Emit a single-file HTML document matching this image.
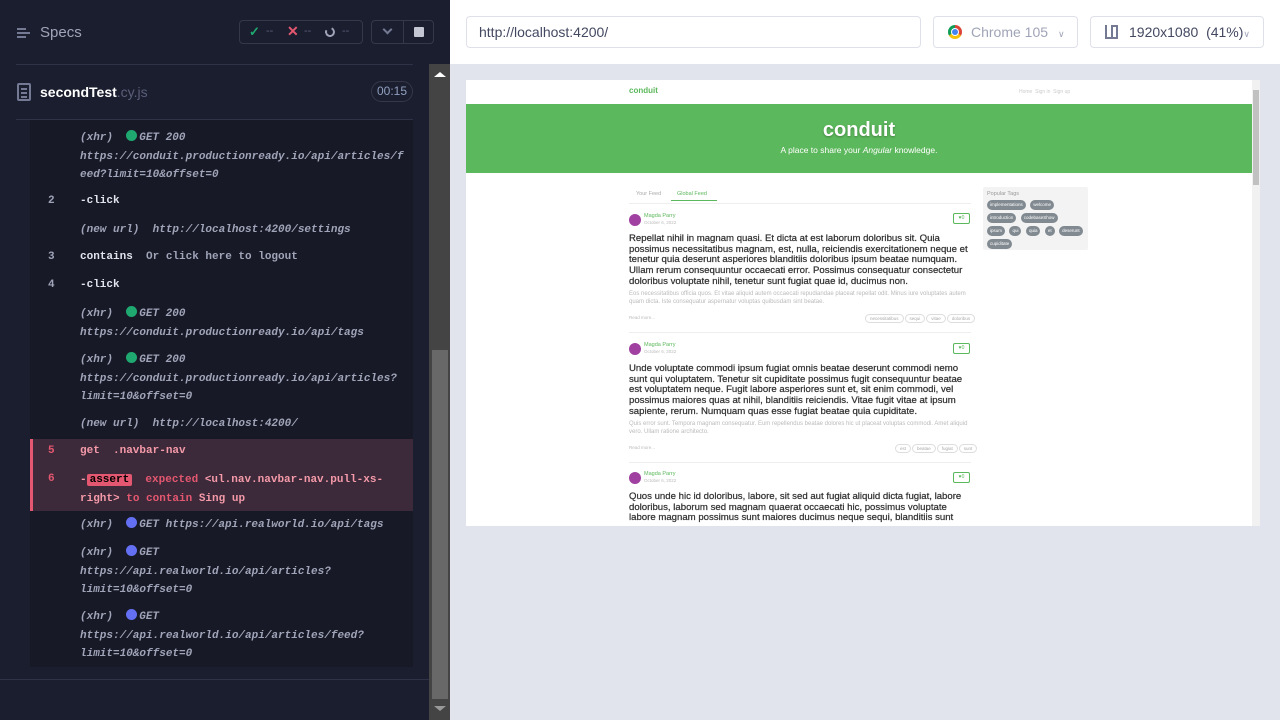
<!DOCTYPE html>
<html><head><meta charset="utf-8"><style>
*{margin:0;padding:0;box-sizing:border-box}
body{width:1280px;height:720px;overflow:hidden;background:#e1e3ed;font-family:"Liberation Sans",sans-serif;position:relative}
#left{position:absolute;left:0;top:0;width:450px;height:720px;background:#1b1e2e}
.abs{position:absolute}
.mono{font-family:"Liberation Mono",monospace;font-size:11px;white-space:nowrap}
.r{position:absolute;left:80px;color:#e1e3ed;font-weight:bold}
.x{color:#a0a4b8;font-style:italic;font-weight:bold;line-height:18.5px}
.n{position:absolute;left:48px;color:#a0a4b8;font-weight:bold}
.dotg{display:inline-block;width:11px;height:11px;border-radius:50%;background:#1fa971;vertical-align:-1px;margin-right:2px}
.dotb{display:inline-block;width:11px;height:11px;border-radius:50%;background:#6470f3;vertical-align:-1px;margin-right:2px}
.prev{font-family:"Liberation Sans",sans-serif}
.title{font-size:9.6px;line-height:10.7px;color:#333;-webkit-text-stroke:.25px #333}
.desc{font-size:6px;line-height:8.5px;color:#bbb;margin-top:2px}
.tags{position:absolute;white-space:nowrap;font-size:0;line-height:0}
.tag{display:inline-block;border:1px solid #ddd;border-radius:6px;font-size:4.5px;line-height:5px;color:#aaa;padding:1px 4px;margin-left:1px}
.ptag{display:inline-block;background:#818a91;color:#fff;border-radius:6px;font-size:4.5px;padding:1px 3px;margin:1px 0}
.av{position:absolute;width:12px;height:12px;border-radius:50%;background:#a040a0}
.heart{position:absolute;width:17px;height:11px;border:1px solid #5cb85c;border-radius:2px;font-size:5px;color:#5cb85c;text-align:center;line-height:9px}
.auth{position:absolute;font-size:5.5px;color:#5cb85c}
.date{position:absolute;font-size:4.5px;color:#bbb}
</style></head><body>
<div id="left">
 <div class="abs" style="left:17px;top:27px;width:15px;height:12px">
  <div class="abs" style="left:0;top:1px;width:9px;height:2px;background:#747994"></div>
  <div class="abs" style="left:0;top:5px;width:13px;height:2px;background:#747994"></div>
  <div class="abs" style="left:0;top:9px;width:9px;height:2px;background:#747994"></div>
 </div>
 <div class="abs" style="left:40px;top:24px;font-size:15px;color:#a0a4b8">Specs</div>
 <div class="abs" style="left:239px;top:20px;width:124px;height:24px;border:1px solid #343849;border-radius:4px;font-size:11px;color:#5a5f7a">
  <span class="abs" style="left:9px;top:3px;color:#1fa971;font-weight:bold;font-size:13px">✓</span><span class="abs" style="left:26px;top:4px">--</span>
  <span class="abs" style="left:47px;top:2px;color:#e45770;font-weight:bold;font-size:14px">✕</span><span class="abs" style="left:64px;top:4px">--</span>
  <span class="abs" style="left:85px;top:6px;width:10px;height:10px;border:2px solid #a0a4b8;border-top-color:transparent;border-radius:50%;transform:rotate(-20deg)"></span><span class="abs" style="left:102px;top:4px">--</span>
 </div>
 <div class="abs" style="left:371px;top:20px;width:63px;height:24px;border:1px solid #343849;border-radius:4px">
  <div class="abs" style="left:31px;top:0;width:1px;height:22px;background:#343849"></div>
  <div class="abs" style="left:12px;top:5px;width:7px;height:7px;border-right:2px solid #747994;border-bottom:2px solid #747994;transform:rotate(45deg)"></div>
  <div class="abs" style="left:42px;top:6px;width:10px;height:10px;background:#c4c6d3;border-radius:1px"></div>
 </div>
 <div class="abs" style="left:16px;top:64px;width:397px;height:1px;background:#2e3247"></div>
 <div class="abs" style="left:17px;top:83px;width:14px;height:18px;border:2px solid #747994;border-radius:2px">
  <div class="abs" style="left:2px;top:3px;width:6px;height:2px;background:#747994"></div>
  <div class="abs" style="left:2px;top:7px;width:6px;height:2px;background:#747994"></div>
  <div class="abs" style="left:2px;top:11px;width:6px;height:2px;background:#747994"></div>
 </div>
 <div class="abs" style="left:40px;top:84px;font-size:14px;color:#fff;font-weight:bold">secondTest<span style="color:#5a5f7a;font-weight:normal">.cy.js</span></div>
 <div class="abs" style="left:371px;top:81px;width:42px;height:21px;border:1px solid #343849;border-radius:11px;font-size:12px;color:#90a0c0;text-align:center;line-height:19px">00:15</div>
 <div class="abs" style="left:16px;top:119px;width:397px;height:1px;background:#2e3247"></div>
 <div class="abs" style="left:30px;top:120px;width:383px;height:547px;background:#171926"></div>
 <div class="abs" style="left:30px;top:439px;width:383px;height:72px;background:#3c2939;border-left:3px solid #e45770"></div>
 <div class="mono">
  <div class="r x" style="top:129px">(xhr)&nbsp; <span class="dotg"></span>GET 200<br>https://conduit.productionready.io/api/articles/f<br>eed?limit=10&amp;offset=0</div>
  <div class="n" style="top:195px">2</div><div class="r" style="top:195px">-click</div>
  <div class="r x" style="top:221px">(new url)&nbsp; http://localhost:4200/settings</div>
  <div class="n" style="top:251px">3</div><div class="r" style="top:251px">contains&nbsp; <span style="color:#a0a4b8">Or click here to logout</span></div>
  <div class="n" style="top:279px">4</div><div class="r" style="top:279px">-click</div>
  <div class="r x" style="top:305px">(xhr)&nbsp; <span class="dotg"></span>GET 200<br>https://conduit.productionready.io/api/tags</div>
  <div class="r x" style="top:351px">(xhr)&nbsp; <span class="dotg"></span>GET 200<br>https://conduit.productionready.io/api/articles?<br>limit=10&amp;offset=0</div>
  <div class="r x" style="top:415px">(new url)&nbsp; http://localhost:4200/</div>
  <div class="n" style="top:445px;color:#e45770">5</div><div class="r" style="top:445px;color:#f59aa9">get&nbsp; .navbar-nav</div>
  <div class="n" style="top:473px;color:#e45770">6</div>
  <div class="r" style="top:471px;color:#f59aa9;line-height:18.5px">-<span style="background:#e45770;color:#000;padding:0 3px;border-radius:2px">assert</span>&nbsp; <span style="color:#e45770">expected</span> &lt;ul.nav.navbar-nav.pull-xs-<br>right&gt; <span style="color:#e45770">to contain</span> Sing up</div>
  <div class="r x" style="top:516px">(xhr)&nbsp; <span class="dotb"></span>GET https://api.realworld.io/api/tags</div>
  <div class="r x" style="top:544px">(xhr)&nbsp; <span class="dotb"></span>GET<br>https://api.realworld.io/api/articles?<br>limit=10&amp;offset=0</div>
  <div class="r x" style="top:608px">(xhr)&nbsp; <span class="dotb"></span>GET<br>https://api.realworld.io/api/articles/feed?<br>limit=10&amp;offset=0</div>
 </div>
 <div class="abs" style="left:0;top:679px;width:429px;height:1px;background:#2e3247"></div>
 <div class="abs" style="left:429px;top:64px;width:21px;height:656px;background:#444"></div>
 <div class="abs" style="left:432px;top:350px;width:16px;height:349px;background:#686868"></div>
 <div class="abs" style="left:434px;top:72px;width:0;height:0;border-left:6px solid transparent;border-right:6px solid transparent;border-bottom:5px solid #fff"></div>
 <div class="abs" style="left:434px;top:706px;width:0;height:0;border-left:6px solid transparent;border-right:6px solid transparent;border-top:5px solid #999"></div>
</div>
<div class="abs" style="left:450px;top:0;width:830px;height:64px;background:#fff"></div>
<div class="abs" style="left:466px;top:16px;width:455px;height:32px;border:1px solid #dfe1ea;border-radius:4px;font-size:14px;color:#434861;padding:7px 12px">http://localhost:4200/</div>
<div class="abs" style="left:933px;top:16px;width:145px;height:32px;border:1px solid #dfe1ea;border-radius:4px;font-size:14px;color:#a0a4b8;padding:7px 0 0 37px">Chrome 105 <span style="font-size:9px;margin-left:6px">∨</span>
 <div class="abs" style="left:14px;top:8px;width:14px;height:14px;border-radius:50%;background:conic-gradient(#db4437 0 120deg,#f4c20d 120deg 240deg,#0f9d58 240deg)"><div class="abs" style="left:4px;top:4px;width:6px;height:6px;border-radius:50%;background:#4285f4;box-shadow:0 0 0 1px #fff"></div></div>
</div>
<div class="abs" style="left:1090px;top:16px;width:174px;height:32px;border:1px solid #dfe1ea;border-radius:4px;font-size:14px;color:#434861;padding:7px 0 0 38px">1920x1080 &nbsp;(41%)<span style="font-size:9px;color:#a0a4b8">∨</span>
 <div class="abs" style="left:14px;top:8px;width:13px;height:14px;border-left:2px solid #747994;border-bottom:2px solid #747994"></div>
 <div class="abs" style="left:20px;top:8px;width:7px;height:14px;border:2px solid #747994;border-bottom:none"></div>
</div>
<div class="abs prev" style="left:466px;top:80px;width:794px;height:446px;background:#fff;overflow:hidden">
 <div class="abs" style="left:163px;top:6px;font-size:8px;color:#5cb85c;font-weight:bold">conduit</div>
 <div class="abs" style="left:553px;top:9px;font-size:5px;color:#ccc">Home &nbsp;Sign in &nbsp;Sign up</div>
 <div class="abs" style="left:0;top:24px;width:786px;height:69px;background:#5cb85c;color:#fff;text-align:center">
  <div style="font-size:20px;font-weight:bold;margin-top:15px;text-shadow:0 1px 2px rgba(0,0,0,.3)">conduit</div>
  <div style="font-size:8.5px;margin-top:3px">A place to share your <i>Angular</i> knowledge.</div>
 </div>
 <div class="abs" style="left:786px;top:0;width:8px;height:446px;background:#f1f1f1"></div>
 <div class="abs" style="left:787px;top:10px;width:6px;height:95px;background:#c1c1c1"></div>
 <div class="abs" style="left:170px;top:111px;font-size:5.5px;color:#aaa">Your Feed</div>
 <div class="abs" style="left:205px;top:107px;width:46px;height:14px;border-bottom:1px solid #5cb85c;font-size:5.5px;color:#5cb85c;padding:4px 6px">Global Feed</div>
 <div class="abs" style="left:163px;top:123px;width:342px;height:1px;background:#eee"></div>
 <div class="abs" style="left:517px;top:107px;width:105px;height:63px;background:#f3f3f3;border-radius:2px;padding:3px 4px;line-height:8px">
  <div style="font-size:5.5px;color:#999">Popular Tags</div>
  <span class="ptag">implementations</span> <span class="ptag">welcome</span><br><span class="ptag">introduction</span> <span class="ptag">codebaseShow</span><br><span class="ptag">ipsum</span> <span class="ptag">qui</span> <span class="ptag">quia</span> <span class="ptag">et</span> <span class="ptag">deserunt</span><br><span class="ptag">cupiditate</span>
 </div>
 <div class="av" style="left:163px;top:134px"></div><div class="auth" style="left:178px;top:133px">Magda Parry</div><div class="date" style="left:178px;top:140px">October 6, 2022</div>
 <div class="heart" style="left:487px;top:133px">♥0</div>
 <div class="abs" style="left:163px;top:154px;width:345px"><div class="title">Repellat nihil in magnam quasi. Et dicta at est laborum doloribus sit. Quia possimus necessitatibus magnam, est, nulla, reiciendis exercitationem neque et tenetur quia deserunt asperiores blanditiis doloribus ipsum beatae numquam. Ullam rerum consequuntur occaecati error. Possimus consequatur consectetur doloribus voluptate nihil, tenetur sunt fugiat quae id, ducimus non.</div><div class="desc">Eos necessitatibus officia quos. Et vitae aliquid autem occaecati repudiandae placeat repellat odit. Minus iure voluptates autem quam dicta. Iste consequatur aspernatur voluptas quibusdam sint beatae.</div></div>
 <div class="abs" style="left:163px;top:235px;font-size:4.5px;color:#bbb">Read more...</div>
 <div class="tags" style="left:398px;top:234px"><span class="tag">necessitatibus</span><span class="tag">sequi</span><span class="tag">vitae</span><span class="tag">doloribus</span></div>
 <div class="abs" style="left:163px;top:252px;width:342px;height:1px;background:#eee"></div>
 <div class="av" style="left:163px;top:263px"></div><div class="auth" style="left:178px;top:262px">Magda Parry</div><div class="date" style="left:178px;top:269px">October 6, 2022</div>
 <div class="heart" style="left:487px;top:263px">♥0</div>
 <div class="abs" style="left:163px;top:284px;width:345px"><div class="title">Unde voluptate commodi ipsum fugiat omnis beatae deserunt commodi nemo sunt qui voluptatem. Tenetur sit cupiditate possimus fugit consequuntur beatae est voluptatem neque. Fugit labore asperiores sunt et, sit enim commodi, vel possimus maiores quas at nihil, blanditiis reiciendis. Vitae fugit vitae at ipsum sapiente, rerum. Numquam quas esse fugiat beatae quia cupiditate.</div><div class="desc">Quis error sunt. Tempora magnam consequatur. Eum repellendus beatae dolores hic ut placeat voluptas commodi. Amet aliquid vero. Ullam ratione architecto.</div></div>
 <div class="abs" style="left:163px;top:365px;font-size:4.5px;color:#bbb">Read more...</div>
 <div class="tags" style="left:428px;top:364px"><span class="tag">est</span><span class="tag">beatae</span><span class="tag">fugiat</span><span class="tag">sunt</span></div>
 <div class="abs" style="left:163px;top:382px;width:342px;height:1px;background:#eee"></div>
 <div class="av" style="left:163px;top:392px"></div><div class="auth" style="left:178px;top:391px">Magda Parry</div><div class="date" style="left:178px;top:398px">October 6, 2022</div>
 <div class="heart" style="left:487px;top:392px">♥0</div>
 <div class="abs" style="left:163px;top:412px;width:345px"><div class="title">Quos unde hic id doloribus, labore, sit sed aut fugiat aliquid dicta fugiat, labore doloribus, laborum sed magnam quaerat occaecati hic, possimus voluptate labore magnam possimus sunt maiores ducimus neque sequi, blanditiis sunt</div></div>
</div>
</body></html>
